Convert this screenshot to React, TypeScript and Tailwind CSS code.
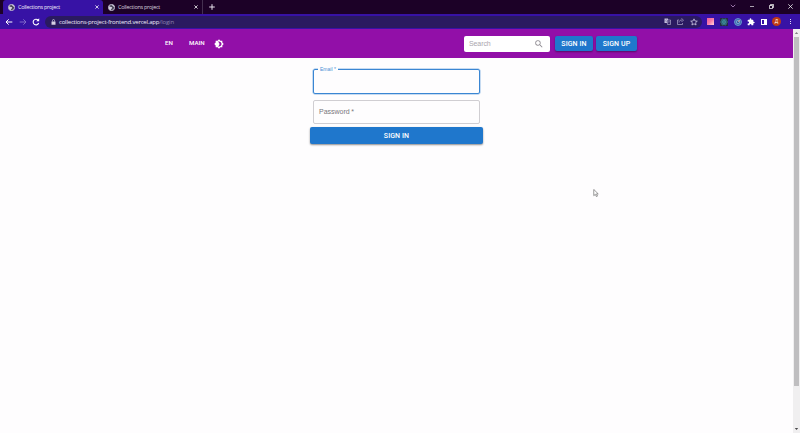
import React from "react";

function Globe() {
  return (
    <svg viewBox="0 0 16 16" className="h-[7px] w-[7px] shrink-0">
      <circle cx="8" cy="8" r="7" fill="#4a4658" stroke="#d3cfe0" strokeWidth="2" />
      <path d="M2 5c3 0 4 2 6 2s2 3 0 4-1 3-2 3C3 13 1 10 2 5zM8 1c0 3 3 2 4 4s3 2 3 2c0-3-3-6-7-6z" fill="#d3cfe0" />
    </svg>
  );
}

function Cross({ className = "" }: { className?: string }) {
  return (
    <svg viewBox="0 0 10 10" className={"shrink-0 " + className} fill="none" stroke="#fff" strokeWidth="1.9">
      <path d="M1 1l8 8M9 1L1 9" />
    </svg>
  );
}

function TabStrip() {
  return (
    <div className="flex h-[14px] bg-[#1c0127]">
      <div className="ml-[3px] flex w-[100px] items-center rounded-t-[3px] bg-[#3712a5] pr-[4px] pl-[5px]">
        <Globe />
        <span className="ml-[3px] grow text-[5.5px] tracking-[-0.28px] text-[#f0edf8]">Collections project</span>
        <Cross className="h-[4px] w-[4px]" />
      </div>
      <div className="flex w-[100px] items-center border-r border-[#443050] pr-[4px] pl-[5px]">
        <Globe />
        <span className="ml-[3px] grow text-[5.5px] tracking-[-0.28px] text-[#d8d0dd]">Collections project</span>
        <Cross className="h-[4px] w-[4px]" />
      </div>
      <div className="flex grow items-center pl-[6px]">
        <svg viewBox="0 0 6 6" className="h-[6px] w-[6px]" stroke="#e8e3ee" strokeWidth="1">
          <path d="M3 .2v5.6M.2 3h5.6" />
        </svg>
      </div>
      <div className="flex h-[12px] items-center">
        <svg viewBox="0 0 6 4" className="mr-[14px] h-[4px] w-[6px]" fill="none" stroke="#b68fc6" strokeWidth=".8">
          <path d="M.8 .8L3 3 5.2 .8" />
        </svg>
        <div className="mr-[15px] h-px w-[4px] bg-[#aaa0af]" />
        <svg viewBox="0 0 6 6" className="mr-[14px] h-[5px] w-[5px]" fill="none" stroke="#eee" strokeWidth="1">
          <path d="M.5 1.8h3.7v3.7H.5zM1.8 1.8V.5h3.7v3.7H4.2" />
        </svg>
        <svg viewBox="0 0 5 5" className="mr-[7px] h-[5px] w-[5px]" stroke="#eee" strokeWidth=".8">
          <path d="M.3 .3l4.4 4.4M4.7 .3L.3 4.7" />
        </svg>
      </div>
    </div>
  );
}

function Toolbar() {
  return (
    <div className="flex h-[15px] items-center bg-[#3712a5]">
      <svg viewBox="0 0 24 24" className="ml-[5px] h-[8px] w-[8px]" fill="none" stroke="#fff" strokeWidth="3">
        <path d="M22 12H3M11 4l-8 8 8 8" />
      </svg>
      <svg viewBox="0 0 24 24" className="ml-[5.5px] h-[8px] w-[8px]" fill="none" stroke="#8069c9" strokeWidth="3">
        <path d="M2 12h19M13 4l8 8-8 8" />
      </svg>
      <svg viewBox="0 0 24 24" className="ml-[5.5px] h-[8px] w-[8px]" fill="none" stroke="#fff" strokeWidth="3.2">
        <path d="M20 15a8.5 8.5 0 1 1-2-9l2 2" />
        <path d="M21.500 1v9h-9z" fill="#fff" stroke="none" />
      </svg>
      <div className="ml-[5px] flex h-[12px] w-[657px] items-center rounded-full bg-[#2a1a60] pr-[4px] pl-[5.5px]">
        <svg viewBox="0 0 10 12" className="h-[6px] w-[5px]">
          <path d="M1 5h8v6.500H1z" fill="#d6d1e4" />
          <path d="M3 5V3a2 2 0 0 1 4 0v2" fill="none" stroke="#d6d1e4" strokeWidth="1.400" />
        </svg>
        <span className="ml-[3.5px] grow pt-[1px] text-[6px] tracking-[-0.2px] text-[#efedf7]">
          collections-project-frontend.vercel.app<span className="text-[#8c82ad]">/login</span>
        </span>
        <svg viewBox="0 0 14 14" className="h-[7px] w-[7px]">
          <path d="M1 1h7l1 9H1z" fill="#c3bddb" />
          <path d="M6 4h7v9H7z" fill="#2a1a60" stroke="#c3bddb" strokeWidth="1.200" />
          <path d="M6.500 4a2 2 0 1 0 0 3H5M8 7h4M10 6v1c0 2-1 3-2 4M9 8l3 3" fill="none" stroke="#8177a4" strokeWidth="1" />
        </svg>
        <svg viewBox="0 0 14 14" className="ml-[6.5px] h-[7px] w-[7px]" fill="none" stroke="#b9b1d4" strokeWidth="1.300">
          <path d="M4 4H1v9h10v-3M4 9c0-4 3-5 6-5M9 1l4 3-4 4" />
        </svg>
        <svg viewBox="0 0 24 24" className="ml-[6px] h-[8px] w-[8px]" fill="none" stroke="#d5cfea" strokeWidth="2.300">
          <path d="M12 2.500l2.900 6.400 7 .7-5.300 4.600 1.600 6.800-6.200-3.600L5.800 21l1.600-6.800L2.100 9.600l7-.7z" />
        </svg>
      </div>
      <div className="ml-[5px] h-[7px] w-[7px] bg-linear-to-br from-[#ed5b9f] via-[#f77ba8] to-[#ffd4dc]" />
      <svg viewBox="0 0 16 16" className="ml-[6px] h-[8px] w-[8px]">
        <path d="M0 0h16v16H0z" fill="#252a40" />
        <g fill="none" stroke="#3b98a5" strokeWidth="1.300">
          <ellipse cx="8" cy="8" rx="7" ry="2.700" />
          <ellipse cx="8" cy="8" rx="7" ry="2.700" transform="rotate(60 8 8)" />
          <ellipse cx="8" cy="8" rx="7" ry="2.700" transform="rotate(120 8 8)" />
        </g>
        <circle cx="8" cy="8" r="1.500" fill="#57c3ce" />
      </svg>
      <svg viewBox="0 0 16 16" className="ml-[5.5px] h-[8px] w-[8px]">
        <circle cx="8" cy="8" r="7" fill="#3c62a9" stroke="#72a9d8" strokeWidth="1.600" />
        <circle cx="8" cy="8" r="3.500" fill="none" stroke="#8cc6de" strokeWidth="1.400" />
        <path d="M8 8l4-4" stroke="#e59790" strokeWidth="1.600" />
      </svg>
      <svg viewBox="0 0 24 24" className="ml-[5px] h-[8px] w-[8px]" fill="#fff">
        <path d="M20.500 11H19V7c0-1.100-.9-2-2-2h-4V3.500a2.500 2.500 0 0 0-5 0V5H4c-1.100 0-2 .9-2 2v3.800h1.500a2.700 2.700 0 0 1 0 5.400H2V20c0 1.100.9 2 2 2h3.800v-1.500a2.700 2.700 0 0 1 5.400 0V22H17c1.100 0 2-.9 2-2v-4h1.500a2.500 2.500 0 0 0 0-5z" />
      </svg>
      <div className="ml-[6.5px] h-[6px] w-[6px] border border-r-[3px] border-white" />
      <div className="ml-[5px] flex h-[9px] w-[9px] items-center justify-center rounded-full bg-[#c13b13] text-[5px] leading-none text-white">
        Д
      </div>
      <div className="ml-[9px] flex flex-col gap-[1px]">
        <i className="h-px w-px bg-[#e1dbf2]" />
        <i className="h-px w-px bg-[#e1dbf2]" />
        <i className="h-px w-px bg-[#e1dbf2]" />
      </div>
    </div>
  );
}

function AppBar() {
  return (
    <header className="flex h-[29px] items-center bg-[#920fa8] pl-[165px] text-white">
      <span className="w-[24px] font-[Roboto,sans-serif] text-[6.2px] font-medium">EN</span>
      <span className="w-[25px] font-[Roboto,sans-serif] text-[6.2px] font-medium">MAIN</span>
      <svg viewBox="0 0 24 24" className="h-[10px] w-[10px]" fill="#fff">
        <path d="M20 8.690V4h-4.690L12 .69 8.690 4H4v4.690L.69 12 4 15.310V20h4.690L12 23.310 15.310 20H20v-4.690L23.310 12 20 8.690zM12 18c-.89 0-1.740-.2-2.500-.55C11.560 16.500 13 14.420 13 12s-1.440-4.500-3.500-5.450C10.260 6.200 11.110 6 12 6c3.310 0 6 2.690 6 6s-2.690 6-6 6z" />
      </svg>
      <div className="ml-[240px] flex h-[16px] w-[86px] items-center rounded-[2px] bg-white pr-[6px] pl-[5px]">
        <span className="grow pt-[1px] text-[7px] tracking-[-0.1px] text-[#aaa6ad]">Search</span>
        <svg viewBox="0 0 24 24" className="h-[10px] w-[10px]" fill="#8f8b92">
          <path d="M15.500 14h-.79l-.28-.27A6.470 6.470 0 0 0 16 9.500 6.500 6.500 0 1 0 9.500 16c1.610 0 3.090-.59 4.230-1.570l.27.28v.79l5 4.990L20.490 19l-4.990-5zm-6 0C7.010 14 5 11.990 5 9.500S7.010 5 9.500 5 14 7.010 14 9.500 11.990 14 9.500 14z" />
        </svg>
      </div>
      <button className="ml-[5px] h-[15px] w-[38px] rounded-[2px] bg-[#1f77cc] pt-[1px] font-[Roboto,sans-serif] text-[7px] leading-none font-medium tracking-[0.1px] shadow-[0_1px_2px_rgba(0,0,0,0.4)]">
        SIGN IN
      </button>
      <button className="ml-[3px] h-[15px] w-[41px] rounded-[2px] bg-[#1f77cc] pt-[1px] font-[Roboto,sans-serif] text-[7px] leading-none font-medium tracking-[0.1px] shadow-[0_1px_2px_rgba(0,0,0,0.4)]">
        SIGN UP
      </button>
    </header>
  );
}

function LoginForm() {
  return (
    <form className="mx-auto mt-[8px] flex w-[173px] flex-col">
      <fieldset className="mx-[3px] h-[27.5px] rounded-[2px] border border-[#3a86d3] px-[4px] shadow-[0_0_0_0.5px_#8fb9e4]">
        <legend className="h-[6px] bg-[#fefdfe] px-[2px] text-[5px] leading-[7px] text-[#4b8fd5]">Email *</legend>
      </fieldset>
      <div className="mx-[3px] mt-[6.5px] flex h-[24px] items-center rounded-[2px] border border-[#d0ced2] pl-[5px] text-[7px] text-[#79767c]">
        Password&thinsp;*
      </div>
      <button
        type="button"
        className="mt-[3px] h-[17px] rounded-[2px] bg-[#1f77cc] pt-[1px] font-[Roboto,sans-serif] text-[7px] leading-none font-medium tracking-[0.1px] text-white shadow-[0_1px_2px_rgba(0,0,0,0.45)]"
      >
        SIGN IN
      </button>
    </form>
  );
}

function Scrollbar() {
  return (
    <div className="flex h-[404px] w-[7px] shrink-0 flex-col items-center bg-[#f0eff0]">
      <svg viewBox="0 0 7 8" className="h-[8px] w-[7px]" fill="#858386">
        <path d="M1.800 5L3.500 3l1.700 2z" />
      </svg>
      <div className="h-[349px] w-[5px] bg-[#bfbec0]" />
      <div className="grow" />
      <svg viewBox="0 0 7 8" className="h-[8px] w-[7px]" fill="#4a494b">
        <path d="M1.800 3h3.400L3.500 5z" />
      </svg>
    </div>
  );
}

export default function App() {
  return (
    <div className="relative flex h-[433px] w-[800px] flex-col overflow-hidden bg-[#fefdfe] font-['Liberation_Sans',sans-serif]">
      <div className="font-['Open_Sans',sans-serif]">
        <TabStrip />
        <Toolbar />
      </div>
      <div className="flex grow">
        <main className="w-[793px]">
          <AppBar />
          <LoginForm />
        </main>
        <Scrollbar />
      </div>
      <svg viewBox="0 0 12 18" className="absolute top-[189px] left-[593px] h-[8px] w-[6px]">
        <path d="M1 1v14l3.500-3 2.300 5 2.500-1-2.200-5H11z" fill="#fff" stroke="#666" strokeWidth="1.500" />
      </svg>
    </div>
  );
}
